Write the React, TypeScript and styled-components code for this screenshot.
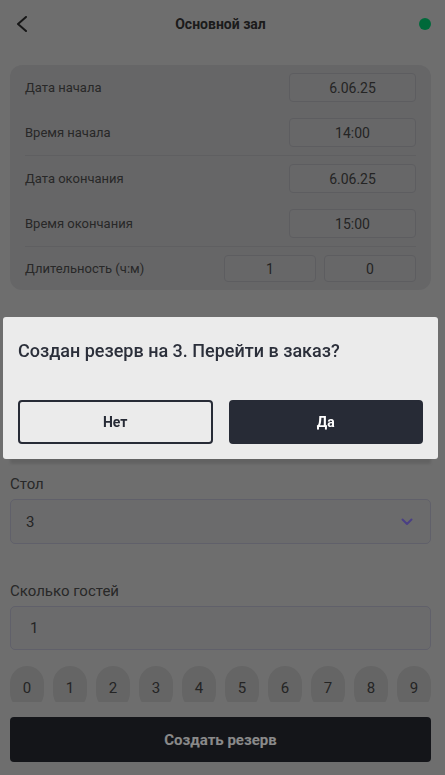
import React from "react";
import styled, { createGlobalStyle } from "styled-components";

const GlobalStyle = createGlobalStyle`
  html, body { margin: 0; padding: 0; }
  body {
    background: #cccccc;
    font-family: Roboto, "Noto Sans", "Liberation Sans", sans-serif;
    color: #3a3a3a;
  }
  * { box-sizing: border-box; }
`;

const Screen = styled.div`
  height: 100vh;
  margin-right: 4px;
  display: flex;
  flex-direction: column;
  background: #cccccc;
`;

const Header = styled.header`
  height: 48px;
  flex-shrink: 0;
  display: grid;
  grid-template-columns: 1fr auto 1fr;
  align-items: center;
  padding: 0 10px;
`;

const BackButton = styled.button`
  justify-self: start;
  margin-left: 5px;
  width: 14px;
  height: 18px;
  padding: 0;
  border: 0;
  background: transparent;
  display: flex;
  align-items: center;
  justify-content: center;
`;

const Title = styled.h1`
  margin: 0;
  font-size: 14px;
  font-weight: 700;
  color: #333333;
`;

const StatusDot = styled.span`
  justify-self: end;
  width: 12px;
  height: 12px;
  border-radius: 50%;
  background: #00c36c;
`;

const Main = styled.main`
  flex: 1;
  overflow: hidden;
  padding: 17px 10px 0;
`;

const TimeCard = styled.section`
  background: #bdbdbf;
  border-radius: 12px;
  padding: 0 15px;
`;

const Group = styled.div`
  display: flex;
  flex-direction: column;
  gap: 16px;
  padding: 8px 0;
  & + & { border-top: 1px solid #b0b0b4; }
`;

const Row = styled.div`
  display: flex;
  align-items: center;
  justify-content: space-between;
`;

const RowLabel = styled.span`
  font-size: 13px;
  color: #4a4a4a;
`;

const ValueGroup = styled.div`
  display: flex;
  gap: 8px;
`;

const ValueBox = styled.div<{ $w: number; $h: number }>`
  width: ${(p) => p.$w}px;
  height: ${(p) => p.$h}px;
  border: 1px solid #acacb2;
  border-radius: 4px;
  background: #bfbfc1;
  display: flex;
  align-items: center;
  justify-content: center;
  font-size: 14px;
  color: #444444;
`;

const Field = styled.div<{ $top: number }>`
  margin-top: ${(p) => p.$top}px;
  display: flex;
  flex-direction: column;
  gap: 5px;
`;

const FieldLabel = styled.label`
  font-size: 15px;
  line-height: 20px;
  color: #4a4a4a;
`;

const Select = styled.div`
  height: 45px;
  border: 1px solid #b2b2c4;
  border-radius: 5px;
  background: #c6c6c8;
  display: flex;
  align-items: center;
  justify-content: space-between;
  padding: 0 17px 0 15px;
  font-size: 15px;
  color: #444444;
`;

const Input = styled.div`
  height: 44px;
  border: 1px solid #b2b2c4;
  border-radius: 5px;
  background: #c6c6c8;
  display: flex;
  align-items: center;
  padding: 0 15px 0 19px;
  font-size: 15px;
  color: #444444;
`;

const Chips = styled.div`
  margin-top: 16px;
  display: flex;
  justify-content: space-between;
`;

const Chip = styled.button`
  width: 34px;
  height: 44px;
  border: 0;
  border-radius: 17px;
  background: #bbbbbb;
  font-family: inherit;
  font-size: 15px;
  color: #444444;
  padding: 0;
`;

const Footer = styled.footer`
  flex-shrink: 0;
  padding: 15px 10px 13px;
`;

const CreateButton = styled.button`
  width: 100%;
  height: 45px;
  border: 0;
  border-radius: 4px;
  background: #25272f;
  color: #ffffff;
  font-family: inherit;
  font-size: 15px;
  font-weight: 700;
`;

const Backdrop = styled.div`
  position: fixed;
  inset: 0;
  background: rgba(0, 0, 0, 0.46);
  display: flex;
  align-items: center;
  padding: 0 7px 0 3px;
`;

const Dialog = styled.div`
  width: 100%;
  height: 142px;
  background: #ebebeb;
  border-radius: 3px;
  padding: 22px 15px 15px;
  display: flex;
  flex-direction: column;
  justify-content: space-between;
  box-shadow: 0 12px 3px -7px rgba(0, 0, 0, 0.12);
`;

const DialogText = styled.p`
  margin: 0;
  font-size: 18px;
  line-height: 24px;
  font-weight: 500;
  color: #2b2f3a;
`;

const DialogActions = styled.div`
  display: grid;
  grid-template-columns: 1fr 1fr;
  gap: 16px;
`;

const DialogButton = styled.button<{ $primary?: boolean }>`
  height: 44px;
  border-radius: 4px;
  border: 2px solid #272b36;
  background: ${(p) => (p.$primary ? "#272b36" : "transparent")};
  color: ${(p) => (p.$primary ? "#ffffff" : "#272b36")};
  font-family: inherit;
  font-size: 14px;
  font-weight: 700;
`;

const timeRows: [string, string][][] = [
  [
    ["Дата начала", "6.06.25"],
    ["Время начала", "14:00"],
  ],
  [
    ["Дата окончания", "6.06.25"],
    ["Время окончания", "15:00"],
  ],
];

export default function App() {
  return (
    <>
      <GlobalStyle />
      <Screen>
        <Header>
          <BackButton aria-label="Назад">
            <svg width="12" height="16" viewBox="0 0 12 16">
              <polyline
                points="10,1 2,8 10,15"
                fill="none"
                stroke="#2a2a2a"
                strokeWidth="2"
                strokeLinecap="round"
                strokeLinejoin="round"
              />
            </svg>
          </BackButton>
          <Title>Основной зал</Title>
          <StatusDot />
        </Header>
        <Main>
          <TimeCard>
            {timeRows.map((group, gi) => (
              <Group key={gi}>
                {group.map(([label, value]) => (
                  <Row key={label}>
                    <RowLabel>{label}</RowLabel>
                    <ValueBox $w={127} $h={29}>
                      {value}
                    </ValueBox>
                  </Row>
                ))}
              </Group>
            ))}
            <Group>
              <Row>
                <RowLabel>Длительность (ч:м)</RowLabel>
                <ValueGroup>
                  <ValueBox $w={92} $h={27}>1</ValueBox>
                  <ValueBox $w={92} $h={27}>0</ValueBox>
                </ValueGroup>
              </Row>
            </Group>
          </TimeCard>
          <Field $top={184}>
            <FieldLabel>Стол</FieldLabel>
            <Select>
              <span>3</span>
              <svg width="12" height="8" viewBox="0 0 12 8">
                <polyline
                  points="1.5,1.5 6,6 10.5,1.5"
                  fill="none"
                  stroke="#8975f5"
                  strokeWidth="2"
                  strokeLinecap="round"
                  strokeLinejoin="round"
                />
              </svg>
            </Select>
          </Field>
          <Field $top={37}>
            <FieldLabel>Сколько гостей</FieldLabel>
            <Input>1</Input>
          </Field>
          <Chips>
            {Array.from({ length: 10 }, (_, i) => (
              <Chip key={i}>{i}</Chip>
            ))}
          </Chips>
        </Main>
        <Footer>
          <CreateButton>Создать резерв</CreateButton>
        </Footer>
      </Screen>
      <Backdrop>
        <Dialog role="dialog">
          <DialogText>Создан резерв на 3. Перейти в заказ?</DialogText>
          <DialogActions>
            <DialogButton>Нет</DialogButton>
            <DialogButton $primary>Да</DialogButton>
          </DialogActions>
        </Dialog>
      </Backdrop>
    </>
  );
}
